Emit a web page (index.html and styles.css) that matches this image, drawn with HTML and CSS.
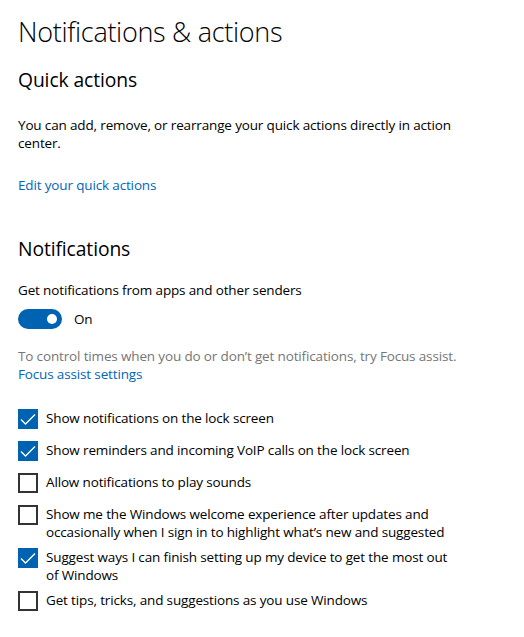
FILE: index.html
```html
<!DOCTYPE html>
<html lang="en">
<head>
<meta charset="utf-8">
<title>Notifications &amp; actions</title>
<link rel="stylesheet" href="styles.css">
</head>
<body>
<main class="page">
  <h1 class="title">Notifications &amp; actions</h1>

  <section class="group">
    <h2 class="subtitle">Quick actions</h2>
    <p class="para">You can add, remove, or rearrange your quick actions directly in action<br>center.</p>
    <a class="link link-quick" href="#">Edit your quick actions</a>
  </section>

  <section class="group">
    <h2 class="subtitle subtitle-notif">Notifications</h2>
    <p class="label">Get notifications from apps and other senders</p>
    <div class="toggle-row">
      <span class="toggle"><span class="knob"></span></span>
      <span class="toggle-text">On</span>
    </div>
    <p class="hint">To control times when you do or don’t get notifications, try Focus assist.</p>
    <a class="link" href="#">Focus assist settings</a>

    <ul class="checks">
      <li class="check">
        <span class="box checked"><svg viewBox="0 0 20 20"><path d="M3 10.5 L7.5 15 L17 5.5"/></svg></span>
        <span class="check-text">Show notifications on the lock screen</span>
      </li>
      <li class="check">
        <span class="box checked"><svg viewBox="0 0 20 20"><path d="M3 10.5 L7.5 15 L17 5.5"/></svg></span>
        <span class="check-text">Show reminders and incoming VoIP calls on the lock screen</span>
      </li>
      <li class="check">
        <span class="box"></span>
        <span class="check-text">Allow notifications to play sounds</span>
      </li>
      <li class="check">
        <span class="box"></span>
        <span class="check-text">Show me the Windows welcome experience after updates and<br>occasionally when I sign in to highlight what’s new and suggested</span>
      </li>
      <li class="check">
        <span class="box checked"><svg viewBox="0 0 20 20"><path d="M3 10.5 L7.5 15 L17 5.5"/></svg></span>
        <span class="check-text">Suggest ways I can finish setting up my device to get the most out<br>of Windows</span>
      </li>
      <li class="check">
        <span class="box"></span>
        <span class="check-text">Get tips, tricks, and suggestions as you use Windows</span>
      </li>
    </ul>
  </section>
</main>
</body>
</html>
```

FILE: styles.css
```css
html, body {
  margin: 0;
  padding: 0;
  background: #ffffff;
}

body {
  font-family: "Open Sans", "Noto Sans", "Liberation Sans", sans-serif;
  font-size: 13.5px;
  letter-spacing: -0.15px;
  color: #000000;
}

.page {
  padding: 12px 0 0 18px;
  display: flex;
  flex-direction: column;
  align-items: flex-start;
}

.title {
  margin: 0;
  font-size: 27px;
  font-weight: 300;
  letter-spacing: -0.3px;
  line-height: 40px;
  white-space: nowrap;
}

.group {
  display: flex;
  flex-direction: column;
  align-items: flex-start;
}

.subtitle {
  margin: 14px 0 0;
  font-size: 19.3px;
  font-weight: 400;
  letter-spacing: -0.1px;
  line-height: 28px;
}

.subtitle-notif {
  margin-top: 41px;
}

.para {
  margin: 22px 0 0;
  line-height: 18px;
  white-space: nowrap;
}

.link {
  color: #0067b8;
  text-decoration: none;
  line-height: 18px;
  white-space: nowrap;
}

.link-quick {
  margin-top: 24px;
}

.label {
  margin: 18px 0 0;
  line-height: 18px;
}

.toggle-row {
  margin-top: 10px;
  display: flex;
  align-items: center;
  gap: 12px;
}

.toggle {
  width: 44px;
  height: 20px;
  border-radius: 10px;
  background: #0063b1;
  display: flex;
  align-items: center;
  justify-content: flex-end;
  padding-right: 5px;
  box-sizing: border-box;
}

.knob {
  width: 10px;
  height: 10px;
  border-radius: 50%;
  background: #ffffff;
}

.toggle-text {
  line-height: 20px;
}

.hint {
  margin: 18px 0 0;
  line-height: 18px;
  color: #767676;
  white-space: nowrap;
}

.checks {
  list-style: none;
  margin: 20px 0 0;
  padding: 0;
  display: flex;
  flex-direction: column;
}

.check {
  min-height: 32px;
  display: flex;
  align-items: flex-start;
  gap: 8px;
}

.box {
  flex: none;
  width: 20px;
  height: 20px;
  margin-top: 6px;
  box-sizing: border-box;
  border: 2px solid #333333;
  display: flex;
  align-items: center;
  justify-content: center;
}

.box.checked {
  border: none;
  background: #0063b1;
}

.box svg {
  width: 20px;
  height: 20px;
  display: block;
}

.box svg path {
  fill: none;
  stroke: #ffffff;
  stroke-width: 1.3;
}

.check-text {
  padding-top: 6px;
  padding-bottom: 1px;
  line-height: 18px;
  white-space: nowrap;
}
```
